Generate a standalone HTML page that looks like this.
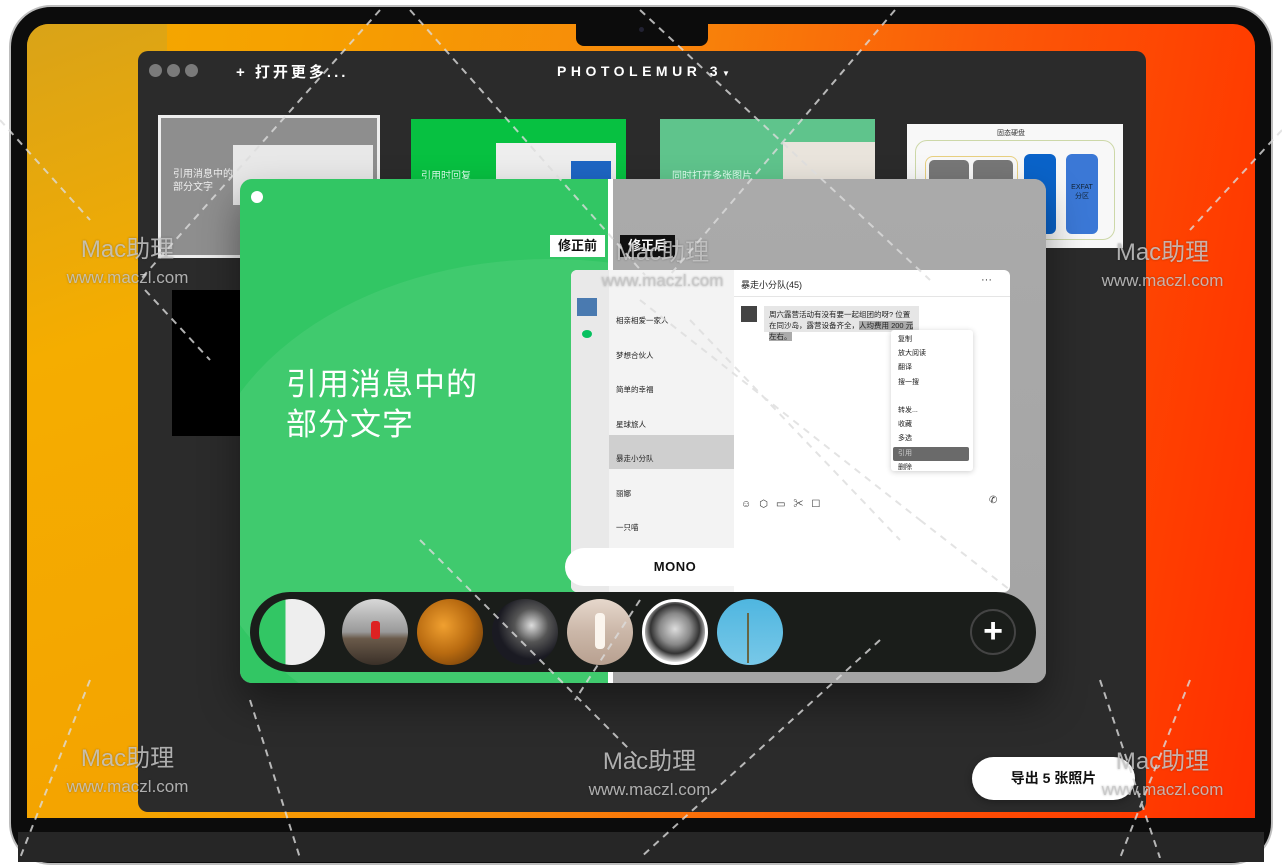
<!DOCTYPE html>
<html><head><meta charset="utf-8"><style>
*{margin:0;padding:0;box-sizing:border-box}
body{width:1282px;height:858px;background:#fff;position:relative;overflow:hidden;font-family:"Liberation Sans","Noto Sans CJK SC",sans-serif}
.abs{position:absolute}
.wm{position:absolute;color:rgba(200,200,200,.85);text-align:center;text-shadow:0 0 2px rgba(0,0,0,.3)}
.wm b{display:block;font-size:24px;font-weight:normal}
.wm i{display:block;font-style:normal;font-size:17px;margin-top:4px}
.c{position:absolute;top:599px;width:66px;height:66px;border-radius:50%;overflow:hidden}
</style></head><body>
<!-- laptop -->
<div class="abs" style="left:9px;top:5px;width:1264px;height:860px;border-radius:42px;background:#0c0c0c;border:2px solid #bdbdbd"></div>
<div class="abs" style="left:27px;top:24px;width:1228px;height:794px;border-radius:22px 22px 0 0;overflow:hidden;background:linear-gradient(100deg,#f3aa00 0%,#f6a100 20%,#f78a0a 45%,#fb5a08 70%,#ff3d00 90%,#ff2e00 100%)">
 <div class="abs" style="left:0;top:0;width:140px;height:794px;background:linear-gradient(160deg,#d9a318,#f5ad00 40%,#f4a300)"></div>
</div>
<div class="abs" style="left:18px;top:832px;width:1246px;height:30px;background:#262626"></div>
<div class="abs" style="left:576px;top:22px;width:132px;height:24px;background:#0c0c0c;border-radius:0 0 8px 8px"></div>
<div class="abs" style="left:639px;top:27px;width:5px;height:5px;border-radius:50%;background:#223"></div>
<!-- app window -->
<div class="abs" style="left:138px;top:51px;width:1008px;height:761px;background:#2b2b2b;border-radius:10px"></div>
<div class="abs" style="left:149px;top:64px;width:13px;height:13px;border-radius:50%;background:#7a7a7a"></div>
<div class="abs" style="left:167px;top:64px;width:13px;height:13px;border-radius:50%;background:#7a7a7a"></div>
<div class="abs" style="left:185px;top:64px;width:13px;height:13px;border-radius:50%;background:#7a7a7a"></div>
<div class="abs" style="left:236px;top:61px;color:#fff;font-size:15px;font-weight:bold;letter-spacing:3px">+ 打开更多...</div>
<div class="abs" style="left:557px;top:63px;color:#fff;font-size:14px;font-weight:bold;letter-spacing:4.5px">PHOTOLEMUR 3<span style="font-size:8px;letter-spacing:0">▼</span></div>
<!-- thumbnails -->
<div class="abs" style="left:158px;top:115px;width:222px;height:143px;background:#8e8e8e;border:3px solid #eee">
 <div class="abs" style="left:12px;top:50px;color:#eee;font-size:10px;line-height:13px">引用消息中的<br>部分文字</div>
 <div class="abs" style="left:72px;top:27px;width:140px;height:60px;background:#e8e8e8"></div>
</div>
<div class="abs" style="left:411px;top:119px;width:215px;height:60px;background:#07c141">
 <div class="abs" style="left:10px;top:48px;color:#dfe;font-size:10px">引用时回复</div>
 <div class="abs" style="left:85px;top:24px;width:120px;height:36px;background:#eee"></div>
 <div class="abs" style="left:160px;top:42px;width:40px;height:18px;background:#1e66c4"></div>
</div>
<div class="abs" style="left:660px;top:119px;width:215px;height:60px;background:#5fc48c">
 <div class="abs" style="left:12px;top:48px;color:#dfe;font-size:10px">同时打开多张图片</div>
 <div class="abs" style="left:123px;top:23px;width:92px;height:37px;background:#e9e4dc"></div>
</div>
<div class="abs" style="left:907px;top:124px;width:216px;height:124px;background:#f8f8f8">
 <div class="abs" style="left:90px;top:4px;font-size:7px;color:#333">固态硬盘</div>
 <div class="abs" style="left:8px;top:16px;width:200px;height:100px;border:1px solid #cdd8a8;border-radius:12px"></div>
 <div class="abs" style="left:18px;top:32px;width:93px;height:56px;border:1px solid #e8d080;border-radius:8px"></div>
 <div class="abs" style="left:22px;top:36px;width:40px;height:50px;background:#777;border-radius:5px"></div>
 <div class="abs" style="left:66px;top:36px;width:40px;height:50px;background:#777;border-radius:5px"></div>
 <div class="abs" style="left:117px;top:30px;width:32px;height:80px;background:#0a63c9;border-radius:6px"></div>
 <div class="abs" style="left:159px;top:30px;width:32px;height:80px;background:#3b78d6;border-radius:6px;font-size:7px;color:#123;text-align:center;padding-top:30px">EXFAT<br>分区</div>
</div>
<div class="abs" style="left:172px;top:290px;width:70px;height:146px;background:#000"></div>
<!-- main card -->
<div class="abs" style="left:240px;top:179px;width:806px;height:504px;border-radius:12px;overflow:hidden;background:#a8a8a8;box-shadow:0 20px 40px rgba(0,0,0,.4)">
 <div class="abs" style="left:0;top:0;width:370px;height:504px;background:#32c664;overflow:hidden">
  <div class="abs" style="left:-40px;top:80px;width:700px;height:500px;border-radius:50%;background:rgba(255,255,255,.07)"></div>
 </div>
 <div class="abs" style="left:370px;top:0;width:436px;height:504px;background:linear-gradient(180deg,#aaa,#a4a4a4)"></div>
 <div class="abs" style="left:368px;top:0;width:5px;height:504px;background:#fff"></div>
 <div class="abs" style="left:11px;top:12px;width:12px;height:12px;border-radius:50%;background:#fff"></div>
 <div class="abs" style="left:46px;top:186px;color:#fff;font-size:31px;line-height:40px;letter-spacing:1px">引用消息中的<br>部分文字</div>
 <div class="abs" style="left:310px;top:56px;width:55px;height:22px;background:#fff;color:#111;font-size:13px;font-weight:bold;text-align:center;line-height:22px">修正前</div>
 <div class="abs" style="left:380px;top:56px;width:55px;height:22px;background:#111;color:#fff;font-size:13px;font-weight:bold;text-align:center;line-height:22px">修正后</div>
 <!-- wechat screenshot -->
 <div class="abs" style="left:331px;top:91px;width:439px;height:322px;background:#fff;border-radius:6px;overflow:hidden">
  <div class="abs" style="left:0;top:0;width:38px;height:322px;background:#e9e9e9"></div>
  <div class="abs" style="left:6px;top:28px;width:20px;height:18px;background:#4a7ab0"></div>
  <div class="abs" style="left:11px;top:60px;width:10px;height:8px;border-radius:50%;background:#07c160"></div>
  <div class="abs" style="left:38px;top:0;width:125px;height:322px;background:#f3f3f3"></div>
  <div class="abs" style="left:38px;top:165px;width:125px;height:34px;background:#cfcfcf"></div>
  <div class="abs" style="left:45px;top:34px;font-size:7.5px;line-height:34.5px;color:#222">
   相亲相爱一家人<br>梦想合伙人<br>简单的幸福<br>星球旅人<br>暴走小分队<br>丽娜<br>一只喵</div>
  <div class="abs" style="left:170px;top:8px;font-size:9px;color:#222">暴走小分队(45)</div>
  <div class="abs" style="left:410px;top:4px;font-size:11px;color:#333">···</div>
  <div class="abs" style="left:163px;top:26px;width:276px;height:1px;background:#e5e5e5"></div>
  <div class="abs" style="left:170px;top:36px;width:16px;height:16px;background:#444"></div>
  <div class="abs" style="left:193px;top:36px;width:155px;height:26px;background:#e6e6e6;font-size:7.5px;line-height:11px;padding:3px 5px;color:#222">周六露营活动有没有要一起组团的呀? 位置在同沙岛，露营设备齐全，<span style="background:#aaa">人均费用 200 元左右。</span></div>
  <div class="abs" style="left:320px;top:60px;width:82px;height:141px;background:#fff;box-shadow:0 1px 6px rgba(0,0,0,.2);border-radius:3px;font-size:7px;line-height:14.2px;padding:3px 0 0 7px;color:#222">复制<br>放大阅读<br>翻译<br>搜一搜<br><br>转发...<br>收藏<br>多选<br><span style="display:block;background:#6a6a6a;color:#ccc;margin:0 4px 0 -5px;padding-left:5px;border-radius:2px">引用</span>删除</div>
  <div class="abs" style="left:170px;top:225px;font-size:10px;color:#333;letter-spacing:8px">☺⬡▭✂☐</div>
  <div class="abs" style="left:418px;top:225px;font-size:10px;color:#333">✆</div>
 </div>
 <div class="abs" style="left:325px;top:369px;width:220px;height:38px;border-radius:19px;background:#fff;color:#111;font-size:13px;font-weight:bold;text-align:center;line-height:38px;letter-spacing:.5px">MONO</div>
 <div class="abs" style="left:10px;top:413px;width:786px;height:80px;border-radius:40px;background:#1a1d1a"></div>
</div>
<!-- circles -->
<div class="c" style="left:259px;background:linear-gradient(90deg,#32c664 40%,#eee 40%)"></div>
<div class="c" style="left:342px;background:linear-gradient(180deg,#d8d8d8,#999 50%,#6a5a4a 60%,#3a3028)"><div class="abs" style="left:29px;top:22px;width:9px;height:18px;background:#d22;border-radius:3px"></div></div>
<div class="c" style="left:417px;background:radial-gradient(circle at 40% 40%,#f0a030,#b86a10 50%,#5a3008)"></div>
<div class="c" style="left:492px;background:radial-gradient(circle at 60% 40%,#ddd,#555 30%,#1a1a22 60%)"></div>
<div class="c" style="left:567px;background:linear-gradient(180deg,#e6d8cc,#cbb7a8 50%,#b8a090);"><div class="abs" style="left:28px;top:14px;width:10px;height:36px;background:#fbf5ee;border-radius:4px"></div></div>
<div class="c" style="left:642px;background:radial-gradient(circle at 50% 45%,#ddd,#888 35%,#333 55%,#eee 75%);border:3px solid #fff"></div>
<div class="c" style="left:717px;background:linear-gradient(180deg,#4fb6e0,#78c8e8)"><div class="abs" style="left:30px;top:14px;width:2px;height:50px;background:#664"></div></div>
<div class="abs" style="left:970px;top:609px;width:46px;height:46px;border-radius:50%;border:2px solid #444;color:#fff;font-size:34px;line-height:40px;text-align:center;font-weight:bold">+</div>
<!-- export -->
<div class="abs" style="left:972px;top:757px;width:163px;height:43px;border-radius:22px;background:#fff;color:#111;font-size:14px;font-weight:bold;text-align:center;line-height:43px;box-shadow:0 2px 8px rgba(0,0,0,.3)">导出 5 张照片</div>
<!-- watermarks -->
<div class="wm" style="left:45px;top:229px;width:165px"><b>Mac助理</b><i>www.maczl.com</i></div>
<div class="wm" style="left:1080px;top:232px;width:165px"><b>Mac助理</b><i>www.maczl.com</i></div>
<div class="wm" style="left:45px;top:738px;width:165px"><b>Mac助理</b><i>www.maczl.com</i></div>
<div class="wm" style="left:567px;top:741px;width:165px"><b>Mac助理</b><i>www.maczl.com</i></div>
<div class="wm" style="left:1080px;top:741px;width:165px"><b>Mac助理</b><i>www.maczl.com</i></div>
<div class="wm" style="left:590px;top:232px;width:145px"><b>Mac助理</b><i>www.maczl.com</i></div>
<svg class="abs" style="left:0;top:0" width="1282" height="858"><g stroke="rgba(220,220,220,.8)" stroke-width="2" stroke-dasharray="7 6" fill="none">
<path d="M380 10 L140 280 M410 10 L645 275 M640 10 L930 280 M895 10 L670 275 M1282 130 L1190 230 M0 120 L90 220 M145 290 L210 360 M640 300 L920 520 M920 520 L1010 590 M640 600 L575 700 M690 320 L900 540 M420 540 L640 760 M880 640 L640 858 M90 680 L20 858 M250 700 L300 858 M1100 680 L1160 858 M1190 680 L1120 858"/></g></svg>
</body></html>
